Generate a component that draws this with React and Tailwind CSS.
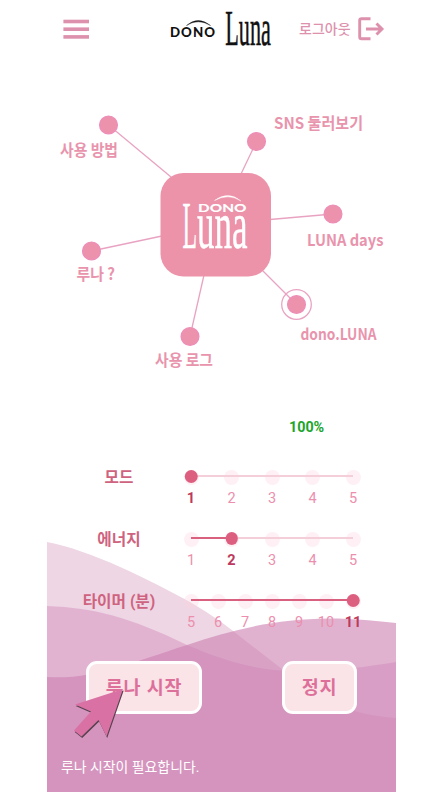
import React from "react";

const KR = "font-['Roboto','Noto_Sans_CJK_KR',sans-serif]";

const nodes = [
  { x: 108.5, y: 125, x2: 171, y2: 177, label: "사용 방법", lx: 60, ly: 156, w: 58 },
  { x: 256.5, y: 141.5, x2: 241, y2: 174, label: "SNS 둘러보기", lx: 274, ly: 129, w: 89 },
  { x: 333, y: 214, x2: 270, y2: 219.5, label: "LUNA days", lx: 307, ly: 246, w: 76.5 },
  { x: 296.5, y: 304.5, x2: 262, y2: 270, label: "dono.LUNA", lx: 300.5, ly: 340, w: 76, ring: true },
  { x: 190, y: 336.5, x2: 204, y2: 275, label: "사용 로그", lx: 155, ly: 366, w: 58 },
  { x: 91.5, y: 251, x2: 162, y2: 236, label: "루나 ?", lx: 76.5, ly: 280, w: 38.5 },
];

function Waves() {
  return (
    <svg className="absolute inset-0" width="349" height="792" viewBox="47 0 349 792">
      <path fill="#eed6e4" d="M47 542C90 550 150 580 190 602C225 622 251 646 282 669C310 690 335 714 396 718V792H47Z" />
      <path fill="#cc72ae" fillOpacity=".35" d="M47 606C95 608 130 617 187 645C225 661 255 670 290 671C330 672 365 667 396 662V792H47Z" />
      <path fill="#cb7fb1" fillOpacity=".6" d="M47 677C94 680 130 663 187 645C230 630 275 619 329 618.5C355 618.5 377 621 396 623V792H47Z" />
    </svg>
  );
}

function Header() {
  return (
    <header className="flex h-[58px] items-center pl-[16px]">
      <button aria-label="menu">
        <svg className="block" width="27" height="20" viewBox="0 0 27 20" fill="#dd91ad">
          <rect x=".4" y=".7" width="25.6" height="3.6" />
          <rect x=".4" y="8.4" width="25.6" height="3.6" />
          <rect x=".4" y="16.1" width="25.6" height="3.6" />
        </svg>
      </button>
      <svg className="ml-[77px] overflow-visible" width="110" height="46" viewBox="167 6 110 46" fill="#111">
        <path d="M186.5 25.5Q198 15.5 210.5 25.5Q198 18 186.5 25.5Z" stroke="#111" strokeWidth=".4" />
        <text x="170" y="36.8" textLength="46" lengthAdjust="spacingAndGlyphs" fontFamily="Lato, sans-serif" fontWeight="900" fontSize="12.8" letterSpacing="1">DONO</text>
        <text transform="translate(225.3 45.4) scale(.435 1)" fontFamily="Liberation Serif, serif" fontSize="51" stroke="#111" strokeWidth=".6">Luna</text>
      </svg>
      <div className="ml-[22px] flex items-center gap-[7px]">
        <span className={`${KR} w-[52px] whitespace-nowrap text-[14px] font-medium leading-[20px] text-[#dd91ad]`}>로그아웃</span>
        <svg width="27" height="24" viewBox="0 0 27 24" fill="none" stroke="#dd91ad" strokeWidth="2.9">
          <path d="M12.5 1.8H3.5Q1.7 1.8 1.7 3.6V20Q1.7 21.8 3.5 21.8H12.5M8 12H24M18.5 6.5L24 12L18.5 17.5" />
        </svg>
      </div>
    </header>
  );
}

function NodeMap() {
  return (
    <svg className="block" width="349" height="342" viewBox="47 58 349 342">
      {nodes.map((n) => (
        <g key={n.label}>
          <line x1={n.x} y1={n.y} x2={n.x2} y2={n.y2} stroke="#e9a3c2" strokeWidth="1.3" />
          {n.ring && <circle cx={n.x} cy={n.y} r="14.8" fill="none" stroke="#e9a3c2" strokeWidth="1.3" />}
          <circle cx={n.x} cy={n.y} r="8.9" fill="#ec92ac" stroke="#ee8eb8" strokeWidth="1.3" />
          <text x={n.lx} y={n.ly} textLength={n.w} lengthAdjust="spacingAndGlyphs" fill="#e994ad" fontFamily="Noto Sans CJK KR, sans-serif" fontWeight="700" fontSize="16">{n.label}</text>
        </g>
      ))}
      <rect x="160.5" y="173" width="110.5" height="103.5" rx="23" fill="#ec93aa" />
      <g fill="#fff">
        <path d="M214.5 200.5Q228 190.5 241 201Q228 193 214.5 200.5Z" stroke="#fff" strokeWidth=".4" />
        <text x="198" y="211.6" textLength="48.5" lengthAdjust="spacingAndGlyphs" fontFamily="Lato, sans-serif" fontWeight="900" fontSize="12">DONO</text>
        <g fontFamily="Liberation Serif, serif" stroke="#fff" strokeWidth=".5">
          <text transform="translate(182.5 248.3) scale(.35 1)" fontSize="68">L</text>
          <text transform="translate(197 248.3) scale(.522 1)" fontSize="67">una</text>
        </g>
      </g>
    </svg>
  );
}

function Slider({ label, steps, value }) {
  const at = steps.indexOf(value);
  const percent = (at / (steps.length - 1)) * 100;
  return (
    <div className="flex h-[62px]">
      <div className={`${KR} w-[144px] pt-[22px] text-center text-[15.7px] font-bold leading-[22px] text-[#cf637f]`}>{label}</div>
      <div className="relative w-[162px] pt-[25px]">
        <div className="flex h-[15px] justify-between">
          {steps.map((s) => (
            <span key={s} className="flex w-0 justify-center">
              <span className="size-[15px] shrink-0 rounded-full bg-[#fcd5df]/35" />
            </span>
          ))}
        </div>
        <div className="absolute left-0 top-[30px] h-[2px] w-full bg-[#f4cfda]" />
        <div className="absolute left-0 top-[30px] h-[2px] bg-[#d9607f]" style={{ width: `${percent}%` }} />
        <div className="absolute top-[25px] size-[12.5px] -translate-x-1/2 rounded-full bg-[#dd5f80]" style={{ left: `${percent}%` }} />
        <div className="relative mt-[4px] flex justify-between">
          {steps.map((s) => (
            <span key={s} className={`${KR} flex w-0 justify-center text-[14.5px] leading-[20px] ${s === value ? "font-bold text-[#bd3a5e]" : "text-[#ec8fae]"}`}>{s}</span>
          ))}
        </div>
      </div>
    </div>
  );
}

function Cursor() {
  const shape = "M123 689L75 704.5L91 711.5L74 730.5L81.5 736.5L98.5 720L106.5 736.5Z";
  return (
    <svg className="absolute -left-[13px] top-[25px]" width="54" height="54" viewBox="73 686 54 54">
      <path d={shape} fill="#57424f" transform="translate(.7 1.4)" />
      <path d={shape} fill="#da71a4" />
    </svg>
  );
}

export default function App() {
  return (
    <div className="h-[792px] w-[443px] overflow-hidden bg-white pl-[47px]">
      <main className="relative h-full w-[349px]">
        <Waves />
        <div className="relative">
          <Header />
          <NodeMap />
          <div className={`${KR} flex h-[45px] pl-[242px] pt-[17px] text-[14.3px] font-bold leading-[20px] text-[#20a52c]`}>100%</div>
          <Slider label="모드" steps={[1, 2, 3, 4, 5]} value={1} />
          <Slider label="에너지" steps={[1, 2, 3, 4, 5]} value={2} />
          <Slider label="타이머 (분)" steps={[5, 6, 7, 8, 9, 10, 11]} value={11} />
          <div className={`${KR} mt-[30px] flex justify-between pl-[39px] pr-[39px] text-[18.5px] font-bold leading-[26px] tracking-[0.8px] text-[#dd709a]`}>
            <div className="relative">
              <button className="h-[53px] w-[116px] rounded-[11px] border-3 border-white bg-[#fae4e8]">루나 시작</button>
              <Cursor />
            </div>
            <button className="h-[53px] w-[75px] rounded-[11px] border-3 border-white bg-[#fae4e8]">정지</button>
          </div>
          <p className={`${KR} mt-[43px] pl-[14px] text-[13.9px] leading-[20px] text-white`}>루나 시작이 필요합니다.</p>
        </div>
      </main>
    </div>
  );
}
